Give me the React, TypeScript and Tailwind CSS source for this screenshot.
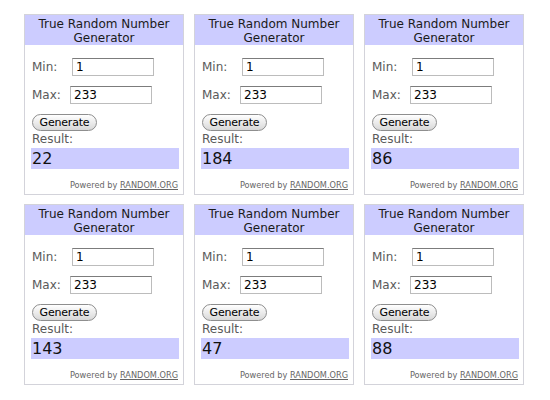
const results = ["22", "184", "86", "143", "47", "88"];

interface FieldRowProps {
  label: string;
  value: string;
  labelWidth: string;
}

const FieldRow = ({ label, value, labelWidth }: FieldRowProps) => {
  return (
    <div className="flex items-center h-[18px]">
      <span className={`${labelWidth} text-[12px] text-[#5a5a5a] pl-[1px]`}>{label}</span>
      <div className="w-[82px] h-[18px] border border-[#bcbcbc] border-t-[#7c7c7c] bg-white text-[12px] leading-[16px] pl-[3px] text-black">
        {value}
      </div>
    </div>
  );
};

const Generator = ({ result }: { result: string }) => {
  return (
    <div className="w-[160px] h-[181px] border border-[#d3d3da] bg-white flex flex-col">
      <div className="h-[30px] bg-[#ccccff] text-center text-[12px] leading-[14px] pt-[2px] text-[#1a1a1a]">
        True Random Number
        <br />
        Generator
      </div>
      <div className="pl-[6px] pr-[4px] flex flex-col">
        <div className="mt-[13px]">
          <FieldRow label="Min:" value="1" labelWidth="w-[41px]" />
        </div>
        <div className="mt-[10px]">
          <FieldRow label="Max:" value="233" labelWidth="w-[39px]" />
        </div>
        <button className="mt-[10px] ml-[1px] w-[65px] h-[17px] rounded-full border border-[#8e8e8e] bg-gradient-to-b from-white to-[#d8d8d8] text-[11px] tracking-[-0.2px] leading-[15px] text-black">
          Generate
        </button>
        <div className="h-[17px] text-[12px] leading-[17px] text-[#5a5a5a] pl-[1px]">Result:</div>
        <div className="w-[148px] h-[21px] bg-[#ccccff] text-[16px] leading-[21px] pl-[1px] text-[#111]">
          {result}
        </div>
        <div className="mt-[11px] text-right pr-[1px] text-[8.2px] leading-[10px] text-[#666]">
          Powered by <span className="underline">RANDOM.ORG</span>
        </div>
      </div>
    </div>
  );
};

export default function App() {
  return (
    <div
      className="w-[550px] h-[400px] bg-white pt-[14px] pl-[24px]"
      style={{ fontFamily: '"DejaVu Sans", Verdana, sans-serif' }}
    >
      <div className="grid grid-cols-[160px_160px_160px] gap-x-[10px] gap-y-[9px]">
        {results.map((r, i) => (
          <Generator key={i} result={r} />
        ))}
      </div>
    </div>
  );
}
